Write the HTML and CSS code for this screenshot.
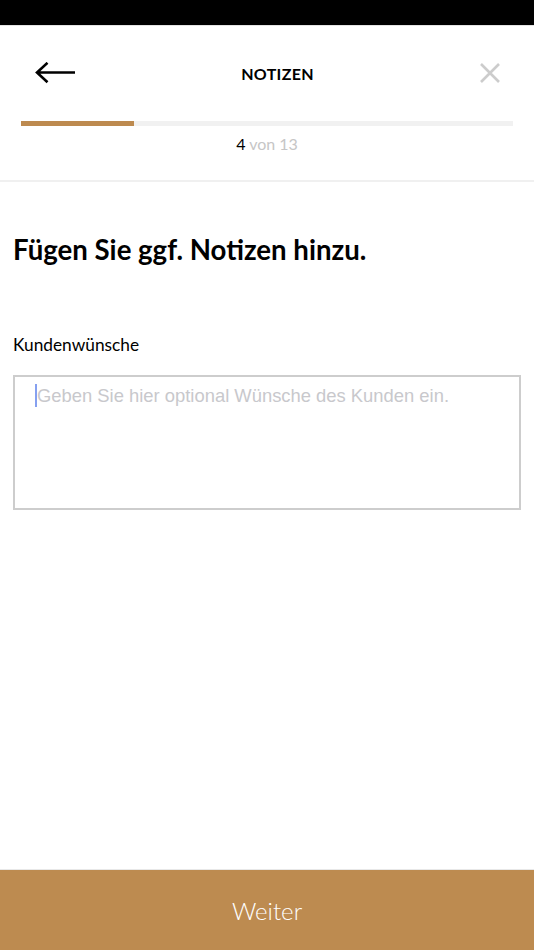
FILE: index.html
```html
<!DOCTYPE html>
<html lang="de">
<head>
<meta charset="utf-8">
<title>Notizen</title>
<link rel="stylesheet" href="styles.css">
</head>
<body>
<div class="app">
  <div class="statusbar"></div>
  <header class="header">
    <div class="nav">
      <button class="nav-back" aria-label="Zurück">
        <svg width="40" height="22" viewBox="0 0 40 22"><path d="M40 10.5H2M12.5 0.8L2 10.5l10.5 9.7" fill="none" stroke="#000" stroke-width="2.6"/></svg>
      </button>
      <div class="nav-title">NOTIZEN</div>
      <button class="nav-close" aria-label="Schließen">
        <svg width="20" height="20" viewBox="0 0 20 20"><path d="M1 1l18 18M19 1L1 19" fill="none" stroke="#cccccc" stroke-width="2.6"/></svg>
      </button>
    </div>
    <div class="progress"><div class="progress-fill" style="width:23%"></div></div>
    <div class="counter"><span class="counter-current">4</span> <span class="counter-total">von 13</span></div>
  </header>
  <main class="content">
    <h1 class="heading">Fügen Sie ggf. Notizen hinzu.</h1>
    <label class="field-label" for="wishes">Kundenwünsche</label>
    <div class="textarea">
      <span class="caret"></span><span class="placeholder">Geben Sie hier optional Wünsche des Kunden ein.</span>
    </div>
  </main>
  <button class="primary">Weiter</button>
</div>
</body>
</html>
```

FILE: styles.css
```css
* { box-sizing: border-box; }
html, body { margin: 0; padding: 0; background: #fff; }
body { font-family: Lato, "Open Sans", sans-serif; color: #000; }
.app { height: 950px; display: flex; flex-direction: column; }
.statusbar { height: 26px; background: #000; border-bottom: 1px solid #e4e4e4; flex: none; }
.header { border-bottom: 2px solid #f0f0f0; height: 156px; flex: none; }
.nav { display: flex; align-items: center; height: 50px; margin-top: 22px; padding: 0 34px 0 35px; }
.nav button { background: none; border: 0; padding: 0; display: flex; cursor: pointer; }
.nav-back { width: 40px; }
.nav-close { width: 20px; }
.nav-title { flex: 1; text-align: center; font-weight: 700; font-size: 16px; letter-spacing: 0.3px; }
.progress { margin: 23px 21px 0; height: 5px; background: #f1f1f1; }
.progress-fill { height: 100%; background: #bd8a4f; }
.counter { text-align: center; font-size: 16px; margin-top: 8px; line-height: 20px; }
.counter-total { color: #c6c6c6; }
.content { flex: 1; padding: 0 13px; }
.heading { margin: 53px 0 0; font-size: 27.6px; font-weight: 700; line-height: 30px; }
.field-label { display: block; margin-top: 69px; font-size: 17.3px; line-height: 22px; }
.textarea { margin-top: 19px; height: 135px; border: 2px solid #cdcdcd; padding: 7px 0 0 20px; display: flex; align-items: flex-start; }
.caret { width: 2px; height: 23px; background: #86a0f0; flex: none; }
.placeholder { font-family: "Liberation Sans", Arial, sans-serif; font-size: 18.4px; color: #c8c8cc; line-height: 23px; }
.primary { flex: none; height: 81px; border: 0; background: #bd8b50; color: #fff; font-family: Lato, "Open Sans", sans-serif; font-weight: 300; font-size: 24px; width: 100%; border-top: 1px solid #e8e8e8; }
```
